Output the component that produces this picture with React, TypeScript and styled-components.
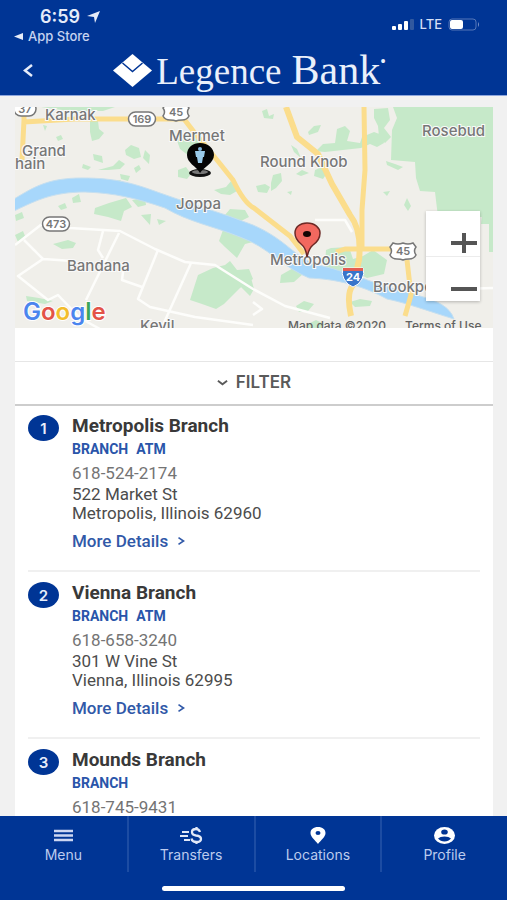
import React from "react";
import styled, { createGlobalStyle } from "styled-components";

const BLUE = "#003595";
const UI = '"Inter", "Open Sans", sans-serif';
const BODY = '"Roboto", "Liberation Sans", sans-serif';

const GlobalStyle = createGlobalStyle`
  *, *::before, *::after { box-sizing: border-box; }
  body { margin: 0; background: #f1f1f1; font-family: ${BODY}; color: #3c3c3c; }
  button { font: inherit; color: inherit; background: none; border: 0; padding: 0; cursor: pointer; }
  a { text-decoration: none; }
`;

const Screen = styled.div`
  display: flex;
  flex-direction: column;
  height: 100vh;
  overflow: hidden;
`;

const Header = styled.header`
  flex: none;
  background: ${BLUE};
  color: #fff;
  border-bottom: 1px solid #8ea6dd;
`;

const StatusBar = styled.div`
  display: flex;
  justify-content: space-between;
  padding: 8px 26px 0 14px;
  font-family: ${UI};
`;

const Clock = styled.div`
  display: flex;
  align-items: center;
  gap: 7px;
  padding-left: 26px;
  font-size: 18px;
  line-height: 18px;
  font-weight: 600;
  color: #e6ecf9;
`;

const BackToApp = styled.button`
  display: flex;
  align-items: center;
  gap: 5px;
  height: 20px;
  font-size: 13px;
  font-weight: 500;
  color: #c6d3f0;
`;

const Signals = styled.div`
  display: flex;
  align-items: center;
  gap: 6px;
  height: 32px;
  font-size: 13px;
  font-weight: 500;
  color: #d5dff5;
`;

const BrandBar = styled.div`
  display: grid;
  grid-template-columns: 56px 1fr 56px;
  align-items: center;
  height: 49px;
`;

const BackButton = styled.button`
  display: flex;
  align-items: center;
  justify-content: center;
  height: 40px;
`;

const Brand = styled.div`
  display: flex;
  align-items: center;
  justify-content: center;
  gap: 4px;
  padding-right: 8px;
  font-family: "Liberation Serif", serif;
  color: #eaf0fb;
`;

const BrandName = styled.span`
  display: flex;
  align-items: baseline;
  gap: 10px;
  font-size: 37px;
  line-height: 40px;
  white-space: nowrap;
`;

const BrandStrong = styled.span`
  display: flex;
  font-size: 42px;
`;

const BrandMark = styled.sup`
  font-size: 16px;
  line-height: 24px;
`;

const Content = styled.main`
  flex: 1;
  min-height: 0;
  display: flex;
  flex-direction: column;
  padding: 11px 14px 0 15px;
`;

const MapPanel = styled.section`
  position: relative;
  flex: none;
  height: 221px;
  overflow: hidden;
  background: #f0efea;
`;

const MapDrawing = styled.svg`
  display: block;
  width: 100%;
  height: 100%;
  font-family: ${UI};
`;

const ZoomControl = styled.div`
  position: absolute;
  right: 13px;
  top: 104px;
  width: 54px;
  background: #fff;
  box-shadow: 0 1px 3px rgba(0, 0, 0, 0.25);
`;

const ZoomButton = styled.button`
  display: flex;
  align-items: flex-end;
  justify-content: flex-end;
  width: 100%;
  height: 45px;
  padding: 0 3px 0 0;

  & + & {
    border-top: 1px solid #ececec;
  }
`;

const Spacer = styled.div`
  flex: none;
  height: 33px;
  background: #fff;
`;

const FilterButton = styled.button`
  && {
    flex: none;
    display: flex;
    align-items: center;
    justify-content: center;
    gap: 8px;
    height: 45px;
    padding-bottom: 2px;
    background: #fff;
    border-top: 1px solid #e6e6e6;
    border-bottom: 2px solid #cdcdcd;
    font-family: ${UI};
    font-size: 17px;
    font-weight: 600;
    color: #5a5a5a;
  }
`;

const BranchList = styled.ol`
  flex: 1;
  min-height: 0;
  margin: 0;
  padding: 0 13px;
  list-style: none;
  background: #fff;
  overflow-y: auto;
  scrollbar-width: none;
`;

const BranchItem = styled.li`
  display: flex;
  gap: 13px;
  height: 167px;
  padding-top: 10px;

  & + & {
    border-top: 2px solid #f0f0f0;
  }
  &:first-child {
    height: 164px;
    padding-top: 9px;
  }
`;

const Badge = styled.span`
  flex: none;
  display: flex;
  align-items: center;
  justify-content: center;
  width: 31px;
  height: 26px;
  border-radius: 50%;
  background: ${BLUE};
  color: #e8eefb;
  font-family: ${UI};
  font-size: 15px;
  font-weight: 600;
`;

const BranchName = styled.h2`
  margin: 0;
  font-size: 19px;
  line-height: 22px;
  font-weight: 700;
  color: #393939;
`;

const Tags = styled.div`
  display: flex;
  gap: 8px;
  font-size: 14px;
  line-height: 24px;
  font-weight: 700;
  color: #2955aa;
`;

const Phone = styled.a`
  display: block;
  font-size: 17px;
  line-height: 24px;
  color: #747474;
`;

const Address = styled.address`
  font-style: normal;
  font-size: 17px;
  line-height: 19px;
  color: #4c4c4c;
`;

const Details = styled.a`
  display: flex;
  align-items: center;
  gap: 8px;
  margin-top: 6px;
  font-size: 17px;
  line-height: 24px;
  font-weight: 500;
  color: #3159a8;
`;

const TabBar = styled.nav`
  flex: none;
  background: ${BLUE};
  height: 84px;
`;

const Tabs = styled.div`
  display: grid;
  grid-template-columns: repeat(4, 1fr);
`;

const Tab = styled.button`
  display: flex;
  flex-direction: column;
  align-items: center;
  height: 56px;
  padding-top: 10px;

  && {
    font-family: ${UI};
    font-size: 14px;
    line-height: 19px;
    color: #bccbee;
  }
  & + && {
    border-left: 2px solid #1c4ca3;
  }
`;

const HomeIndicator = styled.div`
  width: 36%;
  height: 5px;
  margin: 14px auto 0;
  border-radius: 3px;
  background: #fff;
`;

type LabelProps = { x: number; y: number; children: React.ReactNode };

const LabelText = styled.text`
  font-size: 15px;
  font-weight: 500;
  fill: #777;
  stroke: #fafafa;
  stroke-width: 2px;
  paint-order: stroke;
`;

const ShieldText = styled.text`
  font-size: 11px;
  font-weight: 600;
  fill: #777;
  text-anchor: middle;
`;

const CreditText = styled.text`
  font-size: 12px;
  font-weight: 500;
  fill: #626262;
`;

const GoogleText = styled.text`
  font-size: 24px;
  font-weight: 600;
  stroke: #fff;
  stroke-width: 2px;
  paint-order: stroke;
`;

function Label({ x, y, children }: LabelProps) {
  return <LabelText x={x} y={y}>{children}</LabelText>;
}

function RouteShield({ x, y, width = 27, children }: LabelProps & { width?: number }) {
  return (
    <g>
      <rect x={x - width / 2} y={y - 7} width={width} height={14} rx={7} fill="#fff" stroke="#777" strokeWidth={1.5} />
      <ShieldText x={x} y={y + 4}>{children}</ShieldText>
    </g>
  );
}

function UsShield({ x, y, children }: LabelProps) {
  return (
    <g>
      <path
        d={`M${x - 10} ${y - 8} q5 2 10 0 q5 2 10 0 l3 4 q-3 4 0 8 q-2 4 -7 4 q-4 0 -6 1 q-2 -1 -6 -1 q-5 0 -7 -4 q3 -4 0 -8z`}
        fill="#fff" stroke="#777" strokeWidth={1.5}
      />
      <ShieldText x={x} y={y + 4}>{children}</ShieldText>
    </g>
  );
}

function AreaMap() {
  return (
    <MapDrawing viewBox="15 107 478 221" preserveAspectRatio="xMidYMid slice" role="img" aria-label="Map of branches around Metropolis">
      <rect x="-200" y="0" width="1000" height="500" fill="#f0efea" />
      <g fill="#c6e9c9">
        <path d="M393 107H493V252H489V217H438L435 192L420 191L416 178L415 162L391 160L392 130L397 118Z" />
        <path d="M41 107H115L103 111H70L55 109ZM90 118l8 3 1 8 5 4-5 6-7 2-2-9ZM125 150l6-5 8 3 2 9-7 2-8-4ZM145 150l5 5-1 9-6-6ZM93 154l9 2 1 7-9-3ZM83 164l8 3-3 3-6-2ZM98 170l15-4 6-6 6 4-5 5-12 1ZM120 174l10 2-2 5-7-2ZM134 168l5-3 2 4-5 4ZM108 187l4-6 9-1-6 7ZM95 208l14-5 17-5 6 9-8 4-3 10-13-4-14-3ZM132 200l13-2 1 7-8 2ZM72 198l7-4 2 8-8 1ZM58 206l7-3 2 5-6 2ZM56 137l5-2 2 4-5 2ZM43 125l4 1-2 5ZM15 215l7-3 2 6-8 3Z" />
        <path d="M175 135l16-3 10 12-2 22-10-10-9-7ZM178 170l8-3 5 7-4 5-9-2ZM214 190l12-3 5-6 6 10-7 4-9-1ZM225 215l5-6 15 1 4 7-10 5-9-2ZM262 111l5-2 2 7 5-2-1 5-9-1ZM308 132l6-6 7-1-3 7-9 3ZM291 145l6 4 4 9-7-6ZM316 151l7-7 12-1 2-14 8-3 5 5-3 10 13 2 2-6 12-5 8 3 2 8-7 4-7-3-9 4-18 2-18 2-11-1ZM374 109l14-1 2 12-6 8 7 9-6 6-6-6-1-11-4-8ZM386 161l9 3 8 3-5 3-11-5ZM315 170l7-3 5 6-4 6-9-3ZM302 170l7 3-8 3-5-2ZM256 186l9-2 5 3-3 6-9-1ZM271 183l2-8 8-2 1 8-6 7-5 3ZM287 192l5-1-1 4ZM383 192l7-1-3 5ZM407 198l4 8-3 5-4-6Z" />
        <path d="M53 244l15-4 8 3-3 5-11 1ZM15 235l8-4 2 5-7 6ZM26 296l13 2 14 3-8 3-18-3ZM190 300l8-25 15-7 12-3 5-4 7 9 12-1 4 10-13 9-16 16-8 5-14-5ZM223 230l15-1 10 5 5 8-8 2-8 14-12-11-6-6ZM240 286l10-12 4 15-4 7ZM141 215l10-1-1 11ZM157 219l9 2-7 4ZM326 250l5-2 18-1 4 12 10-3 10-6 14 10-3 14-17 4-12-6-22 4-8-10ZM281 275l14-8 8 7-9 8-14 1ZM296 306l8-5 10 3-6 7-9 1ZM350 302l10-3 12 2-2 5-15 1ZM308 324l8-4 8 4-4 5-12 1ZM482 215h7v9h-8Z" />
      </g>
      <g fill="none" stroke="#fdfdfb" strokeWidth="2.5" strokeLinejoin="round">
        <path d="M15 245L42 224L70 228L120 231L155 249L185 262L215 265L253 289L285 306L330 318" />
        <path d="M24 240L43 259L73 261M43 259L18 276L48 300L58 295L80 318L100 329M103 231L98 250L103 258M119 233L86 300M158 250L138 299L150 307L195 317L253 325M191 263L163 325M124 264L122 280L142 287" />
        <path d="M253 302L262 309L253 315M315 220H345L352 232M430 290L493 288" />
      </g>
      <path
        d="M14 199C34 187 48 178 82 178C118 178 135 184 160 193C190 204 223 213 253 225C285 239 293 255 314 264C333 268 346 273 357 276C382 286 401 291 420 296C438 301 450 307 454 319C431 312 407 303 387 299C360 284 333 279 309 278C281 266 268 247 240 237C213 226 189 222 165 208C136 198 114 193 85 192C52 192 35 201 14 211Z"
        fill="#a7d7fb" stroke="#c5dff0" strokeWidth="1"
      />
      <g fill="none" stroke="#fbdd8c" strokeWidth="5" strokeLinejoin="round">
        <path d="M24 107V120L22 160M24 122L75 119H184L194 132L217 160L233 180Q244 203 254 208L290 236L304 254" />
        <path strokeWidth="6" d="M286 107L297 137L318 154L332 184L350 215Q362 230 359 260L353 285Q346 293 351 316" />
        <path d="M364 107L365 170L362 210V250M336 252L345 249H395M407 260L411 295L405 316" />
      </g>
      <RouteShield x={25} y={109} width={22}>37</RouteShield>
      <RouteShield x={142} y={119}>169</RouteShield>
      <UsShield x={176} y={112}>45</UsShield>
      <RouteShield x={56} y={224}>473</RouteShield>
      <UsShield x={403} y={251}>45</UsShield>
      <Label x={45} y={120}>Karnak</Label>
      <Label x={169} y={141}>Mermet</Label>
      <Label x={22} y={156}>Grand</Label>
      <Label x={15} y={169}>hain</Label>
      <Label x={176} y={209}>Joppa</Label>
      <Label x={260} y={167}>Round Knob</Label>
      <Label x={422} y={136}>Rosebud</Label>
      <Label x={67} y={271}>Bandana</Label>
      <Label x={270} y={265}>Metropolis</Label>
      <Label x={373} y={292}>Brookport</Label>
      <Label x={140} y={331}>Kevil</Label>
      <path d="M343 268h20q2 6-1 11-3 6-9 8-6-2-9-8-3-5-1-11Z" fill="#3975ca" stroke="#fff" />
      <path d="M343 268h20v3h-20Z" fill="#e35d52" />
      <text x="353" y="281" textAnchor="middle" fontSize="11" fontWeight="700" fill="#fff">24</text>
      <CreditText x="288" y="330">Map data ©2020</CreditText>
      <CreditText x="405" y="330">Terms of Use</CreditText>
      <GoogleText x="23" y="320">
        <tspan fill="#4b85ee">G</tspan><tspan fill="#e35348">o</tspan><tspan fill="#f3bd2d">o</tspan>
        <tspan fill="#4b85ee">g</tspan><tspan fill="#3ba65b">l</tspan><tspan fill="#e35348">e</tspan>
      </GoogleText>
      <ellipse cx="200" cy="173" rx="11" ry="4" fill="#111" />
      <ellipse cx="200" cy="172" rx="8" ry="2" fill="#777" />
      <path d="M200 173C196 166 187 163 187 155C187 147 193 143 200 143C208 143 214 148 214 155C214 163 204 167 200 173Z" fill="#050505" />
      <circle cx="200" cy="149" r="2" fill="#83b8de" />
      <path d="M195 151h10l-1 6h-1l-1 6h-4l-1-6h-1Z" fill="#9bcbea" />
      <path d="M307 257Q306 248 301 244Q295 239 295 233C295 227 300 223 307 223C315 223 320 228 320 233Q320 240 313 245Q309 248 307 257Z" fill="#f2685f" stroke="#6d2925" strokeWidth="1.5" />
      <ellipse cx="307" cy="234" rx="4" ry="3" fill="#160503" />
    </MapDrawing>
  );
}

function MenuIcon() {
  return (
    <svg width="19" height="19" viewBox="0 0 19 19" aria-hidden="true">
      <path d="M0 5H19M0 9.500H19M0 14H19" stroke="#cdd7f2" strokeWidth="2.500" />
    </svg>
  );
}

function TransfersIcon() {
  return (
    <svg width="24" height="19" viewBox="0 0 24 19" fill="none" stroke="#e1e8f8" strokeWidth="2" aria-hidden="true">
      <path d="M3 6H10M1 10H9M5 14H11" />
      <path d="M21 6Q20 3 17 3Q13 3 13 6Q13 9 17 9.500Q22 10 22 13Q22 16 17.500 16Q13 16 12.500 12.500M17.500 1V4M17.500 15V18" strokeWidth="2.300" />
    </svg>
  );
}

function LocationsIcon() {
  return (
    <svg width="16" height="19" viewBox="0 0 16 19" aria-hidden="true">
      <path fillRule="evenodd" d="M8 1C3.500 1 .5 3.500 .5 7C.5 11 5 14 8 18C11 14 15.500 11 15.500 7C15.500 3.500 12.500 1 8 1ZM8 5A2.500 2 0 1 1 8 9A2.500 2 0 1 1 8 5Z" fill="#fff" />
    </svg>
  );
}

function ProfileIcon() {
  return (
    <svg width="21" height="19" viewBox="0 0 21 19" aria-hidden="true">
      <ellipse cx="10.500" cy="9.500" rx="10.500" ry="8.500" fill="#fff" />
      <ellipse cx="10.500" cy="6" rx="3.300" ry="2.600" fill={BLUE} />
      <path d="M4 12.500Q6 10.500 10.500 10.500Q15 10.500 17 12.500Q14.500 15.500 10.500 15.500Q6.500 15.500 4 12.500Z" fill={BLUE} />
    </svg>
  );
}

function Chevron({ d, size, color, stroke = 2 }: { d: string; size: number; color: string; stroke?: number }) {
  return (
    <svg width={size} height={size} viewBox="0 0 12 12" fill="none" stroke={color} strokeWidth={stroke} aria-hidden="true">
      <path d={d} />
    </svg>
  );
}

type Branch = { name: string; tags: string[]; phone: string; street: string; city: string };

const branches: Branch[] = [
  { name: "Metropolis Branch", tags: ["BRANCH", "ATM"], phone: "618-524-2174", street: "522 Market St", city: "Metropolis, Illinois 62960" },
  { name: "Vienna Branch", tags: ["BRANCH", "ATM"], phone: "618-658-3240", street: "301 W Vine St", city: "Vienna, Illinois 62995" },
  { name: "Mounds Branch", tags: ["BRANCH"], phone: "618-745-9431", street: "", city: "" },
];

const tabs = [
  { label: "Menu", Icon: MenuIcon },
  { label: "Transfers", Icon: TransfersIcon },
  { label: "Locations", Icon: LocationsIcon },
  { label: "Profile", Icon: ProfileIcon },
];

export default function App() {
  return (
    <Screen>
      <GlobalStyle />
      <Header>
        <StatusBar>
          <div>
            <Clock>
              6:59
              <svg width="13" height="12" viewBox="0 0 13 12" fill="#e6ecf9" aria-hidden="true">
                <path d="M13 0L8 12L7 6L0 5Z" />
              </svg>
            </Clock>
            <BackToApp>
              <svg width="9" height="7" viewBox="0 0 9 7" fill="#e6ecf9" aria-hidden="true">
                <path d="M0 3.500L9 0V7Z" />
              </svg>
              App Store
            </BackToApp>
          </div>
          <Signals>
            <svg width="22" height="11" viewBox="0 0 22 11" fill="#fff" aria-hidden="true">
              <rect y="7" width="4" height="4" rx="1" />
              <rect x="6" y="5" width="4" height="6" rx="1" />
              <rect x="12" y="2" width="4" height="9" rx="1" />
              <rect x="18" width="4" height="11" rx="1" fill="#31599f" />
            </svg>
            LTE
            <svg width="33" height="13" viewBox="0 0 33 13" aria-hidden="true">
              <rect x="1" y="1" width="27" height="11" rx="3" fill="none" stroke="#5577b8" />
              <rect x="2" y="2" width="13" height="9" rx="2" fill="#fff" />
              <path d="M30 4Q32 6.500 30 9Z" fill="#7892c8" />
            </svg>
          </Signals>
        </StatusBar>
        <BrandBar>
          <BackButton aria-label="Back">
            <svg width="10" height="13" viewBox="0 0 10 13" fill="none" stroke="#e6ecf9" strokeWidth="2.500" aria-hidden="true">
              <path d="M9 1L2 6.500L9 12" />
            </svg>
          </BackButton>
          <Brand>
            <svg width="39" height="33" viewBox="0 0 39 33" aria-hidden="true">
              <path d="M19.500 0L39 16.500L19.500 33L0 16.500Z" fill="#fff" />
              <path d="M9.500 9L19.500 17.500L29.500 9" fill="none" stroke={BLUE} strokeWidth="1.500" />
            </svg>
            <BrandName>
              Legence <BrandStrong>Bank<BrandMark>•</BrandMark></BrandStrong>
            </BrandName>
          </Brand>
        </BrandBar>
      </Header>

      <Content>
        <MapPanel>
          <AreaMap />
          <ZoomControl>
            <ZoomButton aria-label="Zoom in">
              <svg width="26" height="24" viewBox="0 0 26 24" aria-hidden="true">
                <path d="M0 11H26M13 1V21" stroke="#555" strokeWidth="4" />
              </svg>
            </ZoomButton>
            <ZoomButton aria-label="Zoom out">
              <svg width="26" height="24" viewBox="0 0 26 24" aria-hidden="true">
                <path d="M0 12H26" stroke="#555" strokeWidth="4" />
              </svg>
            </ZoomButton>
          </ZoomControl>
        </MapPanel>
        <Spacer />
        <FilterButton>
          <Chevron d="M1 4L6 8L11 4" size={11} color="#5a5a5a" />
          FILTER
        </FilterButton>
        <BranchList>
          {branches.map((b, i) => (
            <BranchItem key={b.name}>
              <Badge>{i + 1}</Badge>
              <div>
                <BranchName>{b.name}</BranchName>
                <Tags>{b.tags.map((t) => <span key={t}>{t}</span>)}</Tags>
                <Phone href={`tel:${b.phone}`}>{b.phone}</Phone>
                {b.street && (
                  <>
                    <Address>{b.street}<br />{b.city}</Address>
                    <Details href="#details">
                      More Details
                      <Chevron d="M3 2L9 6L3 10" size={10} color="#3159a8" />
                    </Details>
                  </>
                )}
              </div>
            </BranchItem>
          ))}
        </BranchList>
      </Content>

      <TabBar>
        <Tabs>
          {tabs.map(({ label, Icon }) => (
            <Tab key={label}><Icon />{label}</Tab>
          ))}
        </Tabs>
        <HomeIndicator />
      </TabBar>
    </Screen>
  );
}
